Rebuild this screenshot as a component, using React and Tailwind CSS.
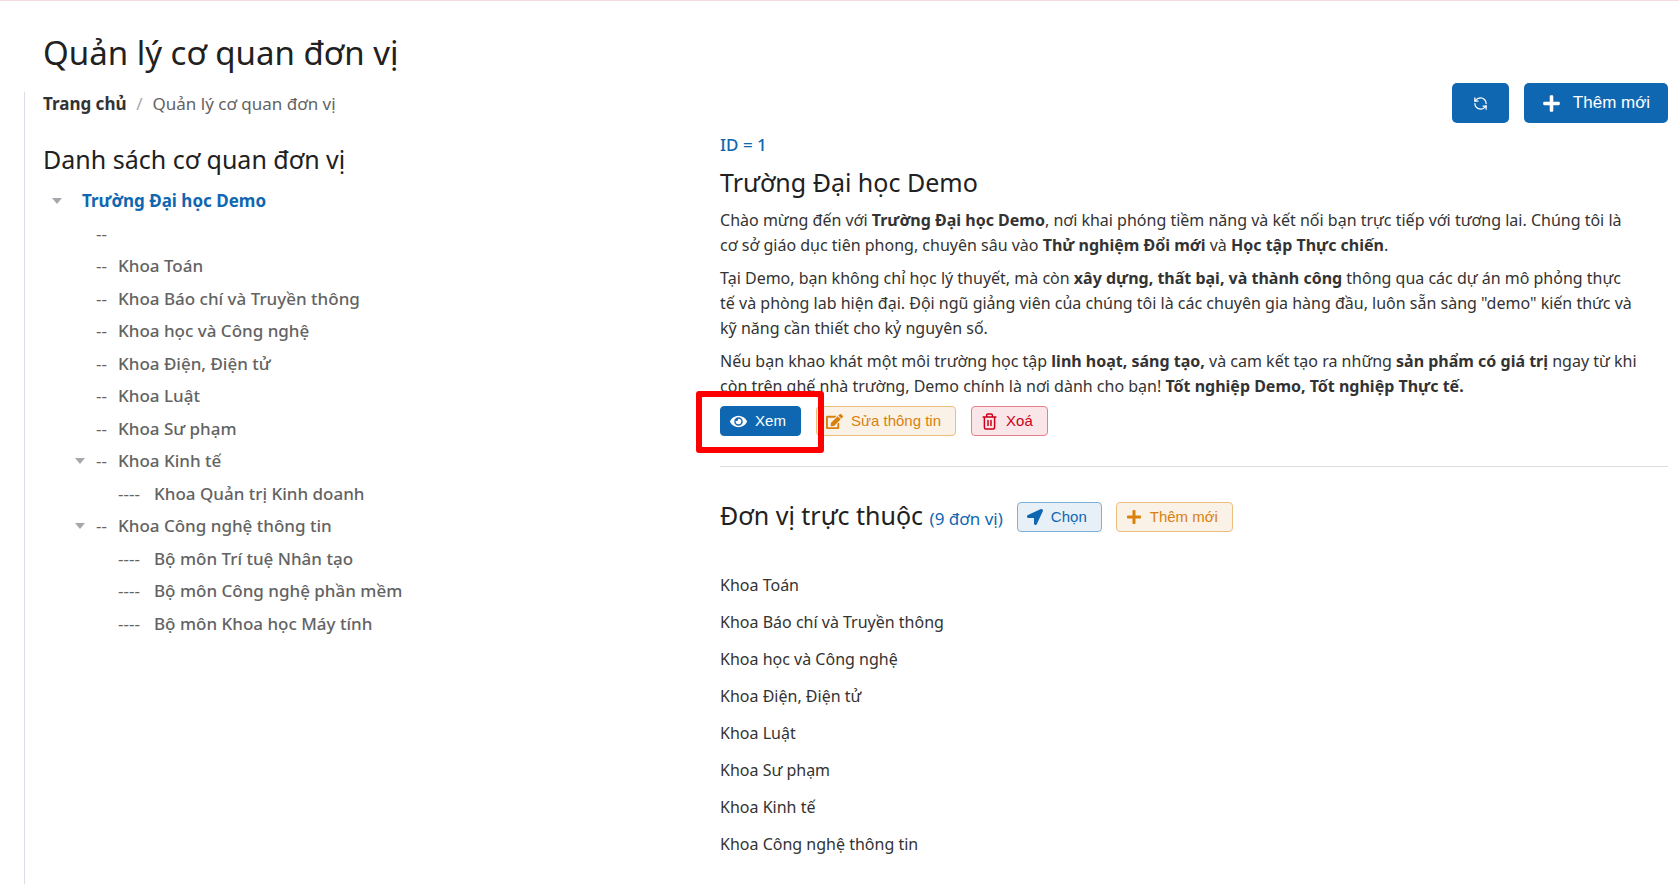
import React from 'react';
import { RefreshCcw } from 'lucide-react';
import { FaEye, FaEdit, FaPlus, FaLocationArrow } from 'react-icons/fa';

const TREE = [
  { level: 1, name: '' },
  { level: 1, name: 'Khoa Toán' },
  { level: 1, name: 'Khoa Báo chí và Truyền thông' },
  { level: 1, name: 'Khoa học và Công nghệ' },
  { level: 1, name: 'Khoa Điện, Điện tử' },
  { level: 1, name: 'Khoa Luật' },
  { level: 1, name: 'Khoa Sư phạm' },
  { level: 1, name: 'Khoa Kinh tế', open: true },
  { level: 2, name: 'Khoa Quản trị Kinh doanh' },
  { level: 1, name: 'Khoa Công nghệ thông tin', open: true },
  { level: 2, name: 'Bộ môn Trí tuệ Nhân tạo' },
  { level: 2, name: 'Bộ môn Công nghệ phần mềm' },
  { level: 2, name: 'Bộ môn Khoa học Máy tính' },
];

const UNITS = TREE.filter((n) => n.level === 1 && n.name);

const BUTTON_STYLES = {
  primary: 'bg-[#1067b1] border-[#1067b1] text-white',
  info: 'bg-[#e7f0f7] border-[#7fb0d8] text-[#1067b1]',
  warning: 'bg-[#fbf2e7] border-[#ecbe7c] text-[#d9800d]',
  danger: 'bg-[#fae6e8] border-[#e57f8a] text-[#cc0018]',
};

const SmallButton = ({ variant, icon, children }) => (
  <button
    type="button"
    className={`flex items-center h-[30px] pl-[9px] pr-[14px] gap-2 border rounded-[4px] text-[15px] whitespace-nowrap font-['Liberation_Sans',sans-serif] cursor-pointer ${BUTTON_STYLES[variant]}`}
  >
    {icon}
    {children}
  </button>
);

const Caret = () => (
  <svg width="10" height="6" viewBox="0 0 10 6" fill="#a6a8ae" aria-hidden="true">
    <path d="M0 0h10L5 6z" />
  </svg>
);

const TrashIcon = () => (
  <svg
    width="17"
    height="17"
    viewBox="0 0 16 16"
    fill="none"
    stroke="currentColor"
    strokeWidth="1.4"
    strokeLinecap="round"
    aria-hidden="true"
  >
    <path d="M2 3.7h12M5.3 3.5V2.2Q5.3 1 6.5 1h3q1.2 0 1.2 1.2v1.3M3.2 4v9.6q0 1.4 1.4 1.4h6.8q1.4 0 1.4-1.4V4M6.6 7v4.7M9.4 7v4.7" />
  </svg>
);

const UnitTree = () => (
  <ul className="text-[17px] text-[#636363]">
    <li className="flex items-center h-8 pl-[9px]">
      <button type="button" aria-label="Thu gọn" className="flex w-[30px]">
        <Caret />
      </button>
      <a href="#unit-1" className="font-bold text-[#1067b1]">
        Trường Đại học Demo
      </a>
    </li>
    {TREE.map((node, i) => (
      <li
        key={i}
        className={`flex items-center odd:h-8 even:h-[33px] ${node.level === 1 ? 'pl-8' : 'pl-[54px]'}`}
      >
        <span className="w-[21px] flex">
          {node.open && (
            <button type="button" aria-label="Thu gọn">
              <Caret />
            </button>
          )}
        </span>
        <span className={node.level === 1 ? 'w-[22px]' : 'w-9'}>
          {node.level === 1 ? '--' : '----'}
        </span>
        <a href="#unit" className="font-medium">
          {node.name}
        </a>
      </li>
    ))}
  </ul>
);

const UnitDetail = () => (
  <section>
    <p className="text-[17px] font-medium text-[#1067b1] leading-[25px]">ID = 1</p>
    <h2 className="mt-[9px] mb-[10px] text-[25px] leading-8 text-[#212121]">Trường Đại học Demo</h2>
    <div className="space-y-2 leading-[25px]">
      <p>
        Chào mừng đến với <b>Trường Đại học Demo</b>, nơi khai phóng tiềm năng và kết nối bạn trực
        tiếp với tương lai. Chúng tôi là
        <br />
        cơ sở giáo dục tiên phong, chuyên sâu vào <b>Thử nghiệm Đổi mới</b> và{' '}
        <b>Học tập Thực chiến</b>.
      </p>
      <p>
        Tại Demo, bạn không chỉ học lý thuyết, mà còn <b>xây dựng, thất bại, và thành công</b>{' '}
        thông qua các dự án mô phỏng thực
        <br />
        tế và phòng lab hiện đại. Đội ngũ giảng viên của chúng tôi là các chuyên gia hàng đầu, luôn
        sẵn sàng "demo" kiến thức và
        <br />
        kỹ năng cần thiết cho kỷ nguyên số.
      </p>
      <p>
        Nếu bạn khao khát một môi trường học tập <b>linh hoạt, sáng tạo,</b> và cam kết tạo ra những{' '}
        <b>sản phẩm có giá trị</b> ngay từ khi
        <br />
        còn trên ghế nhà trường, Demo chính là nơi dành cho bạn!{' '}
        <b>Tốt nghiệp Demo, Tốt nghiệp Thực tế.</b>
      </p>
    </div>
    <div className="flex gap-[15px] mt-[7px]">
      <div className="relative">
        <SmallButton variant="primary" icon={<FaEye size={17} />}>
          Xem
        </SmallButton>
        <div className="absolute -left-6 -right-[23px] -top-[15px] -bottom-[17px] border-[6px] border-[#ff0000] rounded-[3px] z-10 pointer-events-none" />
      </div>
      <SmallButton variant="warning" icon={<FaEdit size={17} />}>
        Sửa thông tin
      </SmallButton>
      <SmallButton variant="danger" icon={<TrashIcon />}>
        Xoá
      </SmallButton>
    </div>
  </section>
);

export default function App() {
  return (
    <div className="min-h-screen flex flex-col bg-white border-t border-[#f6dadd] font-['Noto_Sans',sans-serif] text-base text-[#333333]">
      <header className="pl-[43px] pt-[23px] pb-[10px]">
        <h1 className="text-[33px] leading-[58px] text-[#212121]">Quản lý cơ quan đơn vị</h1>
      </header>
      <main className="flex-1 ml-6 pl-[18px] pr-[11px] border-l border-[#dcdce6]">
        <div className="flex items-start justify-between h-10">
          <nav aria-label="breadcrumb" className="flex leading-6 text-[17px]">
            <a href="#home" className="font-bold">
              Trang chủ
            </a>
            <span className="w-[26px] text-center text-[#a6a8ae]">/</span>
            <span className="text-[#636363]">Quản lý cơ quan đơn vị</span>
          </nav>
          <div className="flex gap-[15px] -mt-[9px] font-['Liberation_Sans',sans-serif] text-white">
            <button
              type="button"
              aria-label="Tải lại"
              className="flex items-center justify-center w-[57px] h-10 rounded-[5px] bg-[#1067b1]"
            >
              <RefreshCcw size={15} strokeWidth={2} />
            </button>
            <button
              type="button"
              className="flex items-center justify-center gap-3 w-36 h-10 rounded-[5px] bg-[#1067b1] text-[17px]"
            >
              <FaPlus size={19} />
              Thêm mới
            </button>
          </div>
        </div>
        <div className="grid grid-cols-[5fr_7fr]">
          <div className="pt-[10px]">
            <h2 className="text-[25px] leading-[34px] mb-[9px] text-[#212121]">
              Danh sách cơ quan đơn vị
            </h2>
            <UnitTree />
          </div>
          <div>
            <UnitDetail />
            <hr className="mt-[30px] border-[#dedede]" />
            <div className="flex items-center gap-[14px] mt-8">
              <h2 className="text-[25px] leading-8 text-[#212121]">
                Đơn vị trực thuộc <span className="text-[17px] text-[#1067b1]">(9 đơn vị)</span>
              </h2>
              <SmallButton variant="info" icon={<FaLocationArrow size={16} />}>
                Chọn
              </SmallButton>
              <SmallButton variant="warning" icon={<FaPlus size={16} />}>
                Thêm mới
              </SmallButton>
            </div>
            <ul className="mt-8">
              {UNITS.map((unit) => (
                <li key={unit.name} className="leading-[37px]">
                  {unit.name}
                </li>
              ))}
            </ul>
          </div>
        </div>
      </main>
    </div>
  );
}
